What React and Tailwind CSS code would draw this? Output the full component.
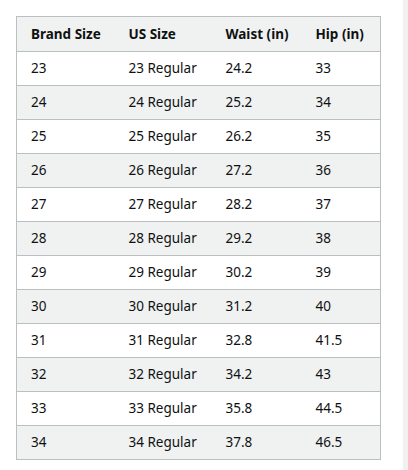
const rows = [
    ['23', '23 Regular', '24.2', '33'],
    ['24', '24 Regular', '25.2', '34'],
    ['25', '25 Regular', '26.2', '35'],
    ['26', '26 Regular', '27.2', '36'],
    ['27', '27 Regular', '28.2', '37'],
    ['28', '28 Regular', '29.2', '38'],
    ['29', '29 Regular', '30.2', '39'],
    ['30', '30 Regular', '31.2', '40'],
    ['31', '31 Regular', '32.8', '41.5'],
    ['32', '32 Regular', '34.2', '43'],
    ['33', '33 Regular', '35.8', '44.5'],
    ['34', '34 Regular', '37.8', '46.5'],
];

const headers = ['Brand Size', 'US Size', 'Waist (in)', 'Hip (in)'];
const widths = ['w-[98px]', 'w-[97px]', 'w-[90px]', 'w-[79px]'];

export default function App() {
    return (
        <div className="flex w-[408px] h-[470px] bg-white overflow-hidden" style={{ fontFamily: '"Noto Sans", Arial, sans-serif' }}>
            <div className="flex-1 pl-4 pr-[22px] pt-4">
                <table className="w-[364px] border-collapse table-fixed text-[13.5px] text-[#0f1111]">
                    <thead>
                        <tr className="bg-[#f0f2f2]">
                            {headers.map((h, i) => (
                                <th key={h} className={`${widths[i]} h-[35px] border-y border-[#bbbfbf] first:border-l last:border-r text-left font-bold pl-[14px]`}>
                                    {h}
                                </th>
                            ))}
                        </tr>
                    </thead>
                    <tbody>
                        {rows.map((r, idx) => (
                            <tr key={r[0]} className={idx % 2 === 0 ? 'bg-white' : 'bg-[#f0f2f2]'}>
                                {r.map((c, i) => (
                                    <td key={i} className="h-[34px] border-y border-[#bbbfbf] first:border-l last:border-r text-left pl-[14px] font-normal">
                                        {c}
                                    </td>
                                ))}
                            </tr>
                        ))}
                    </tbody>
                </table>
            </div>
            <div className="w-[5px] bg-[#f1f1f1]" />
        </div>
    );
}
